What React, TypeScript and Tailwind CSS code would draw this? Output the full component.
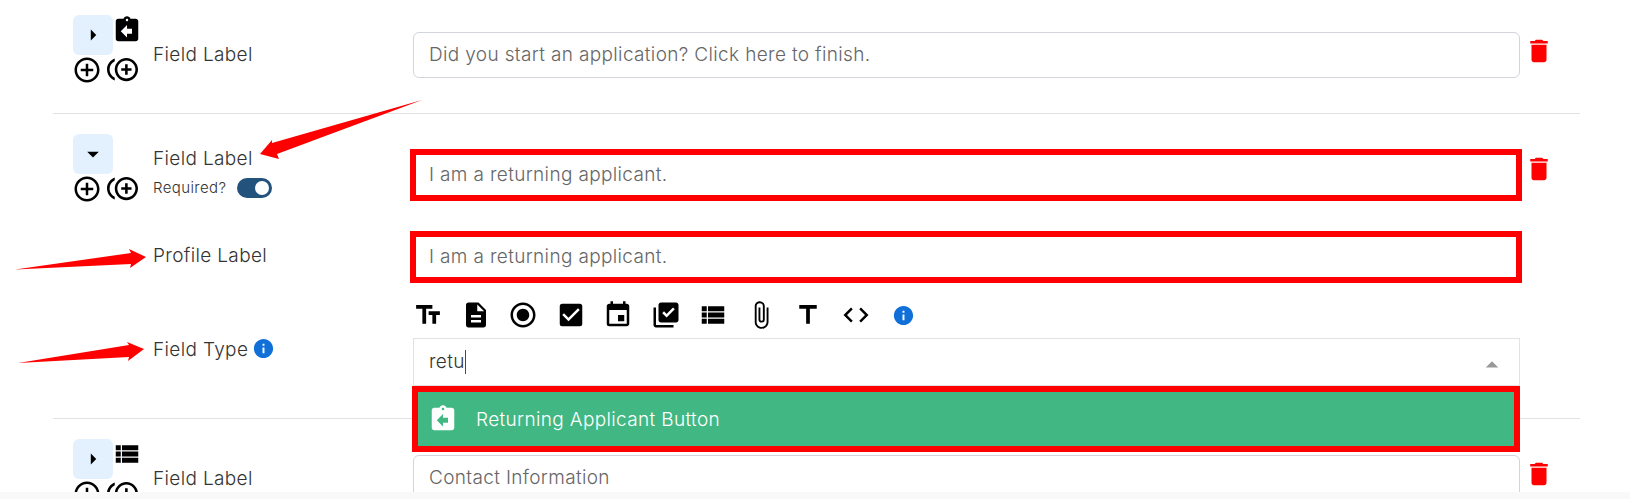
import type { ReactNode } from "react";
import {
  MdAddCircleOutline,
  MdArrowDropDown,
  MdArrowDropUp,
  MdArrowRight,
  MdAssignmentReturn,
  MdAttachFile,
  MdCheckBox,
  MdCode,
  MdControlPointDuplicate,
  MdDelete,
  MdDescription,
  MdEvent,
  MdInfo,
  MdLibraryAddCheck,
  MdRadioButtonChecked,
  MdTextFields,
  MdTitle,
  MdViewList,
} from "react-icons/md";

const fieldIcons = [
  MdTextFields,
  MdDescription,
  MdRadioButtonChecked,
  MdCheckBox,
  MdEvent,
  MdLibraryAddCheck,
  MdViewList,
  MdAttachFile,
  MdTitle,
  MdCode,
];

function Handle({ open, icon }: { open?: boolean; icon?: ReactNode }) {
  return (
    <div className="w-[80px] shrink-0">
      <div className="flex items-start h-[40px]">
        <button className="w-10 h-10 rounded-md bg-[#e3f0fd] flex items-center justify-center text-black">
          {open ? <MdArrowDropDown size={28} /> : <MdArrowRight size={26} />}
        </button>
        <span className="-ml-[1px]">{icon}</span>
      </div>
      <div className="flex items-center gap-[5px] -mt-[1px] -ml-[1px] text-black">
        <MdAddCircleOutline size={30} />
        <MdControlPointDuplicate size={31} />
      </div>
    </div>
  );
}

function TextBox({ value, children }: { value: string; children?: ReactNode }) {
  return (
    <div className="relative w-[1107px] h-[46px] rounded-md border border-[#d1d5db] bg-white flex items-center px-[15px] pt-[1px] text-[19px] tracking-[0.35px] text-[#666]">
      {value}
      {children}
    </div>
  );
}

function RedFrame() {
  return <div className="absolute -left-[4px] -right-[3px] -top-[4px] -bottom-[4px] border-[6px] border-[#ff0000]" />;
}

function Trash() {
  return <MdDelete size={30} className="text-[#ff0000] ml-[4px] shrink-0" />;
}

export default function App() {
  return (
    <div className="relative h-[499px] overflow-hidden bg-white font-['Inter','Liberation_Sans',sans-serif] font-light text-[#333]">
      <div className="mx-[53px] w-[1527px]">
        {/* row 1 */}
        <div className="h-[114px] border-b border-[#e2e2e2] pt-[15px] pl-[20px] flex">
          <Handle icon={<MdAssignmentReturn size={30} className="text-black" />} />
          <div className="w-[260px] pt-[28px] text-[19px] tracking-[0.35px] leading-6">Field Label</div>
          <div className="pt-[17px] flex items-start gap-0">
            <TextBox value="Did you start an application? Click here to finish." />
            <span className="pt-[4px]"><Trash /></span>
          </div>
        </div>

        {/* row 2 */}
        <div className="h-[305px] border-b border-[#e2e2e2] pt-[20px] pl-[20px]">
          <div className="flex h-[80px]">
            <Handle open />
            <div className="w-[260px] pt-[13px]">
              <div className="text-[19px] tracking-[0.35px] leading-6">Field Label</div>
              <div className="flex items-center gap-[11px] mt-[7px] text-[15px] tracking-[0.4px] leading-5">
                Required?
                <span className="w-[35px] h-[20px] rounded-full bg-[#23527c] flex items-center justify-end pr-[3px]">
                  <span className="w-[14px] h-[14px] rounded-full bg-white" />
                </span>
              </div>
            </div>
            <div className="pt-[18px] flex items-start">
              <TextBox value="I am a returning applicant.">
                <RedFrame />
              </TextBox>
              <span className="pt-[2px]"><Trash /></span>
            </div>
          </div>

          <div className="flex h-[69px] pl-[80px]">
            <div className="w-[260px] pt-[30px] text-[19px] tracking-[0.35px] leading-6">Profile Label</div>
            <div className="pt-[20px]">
              <TextBox value="I am a returning applicant.">
                <RedFrame />
              </TextBox>
            </div>
          </div>

          <div className="flex pl-[80px]">
            <div className="w-[260px] pt-[55px] flex items-start gap-[4px]">
              <span className="text-[19px] tracking-[0.35px] leading-6">Field Type</span>
              <MdInfo size={23} className="text-[#1070d8] -mt-[1px]" />
            </div>
            <div className="relative w-[1107px] pt-[17px]">
              <div className="flex items-center gap-[17.5px] text-black h-[30px]">
                {fieldIcons.map((Icon, i) => (
                  <Icon key={i} size={30} />
                ))}
                <MdInfo size={23} className="text-[#1070d8] ml-[4px]" />
              </div>
              <div className="relative mt-[8px] h-[48px] border border-[#e2e2e2] bg-white flex items-center pl-[15px] pr-[12px] text-[19px] tracking-[0.35px] text-[#333]">
                <span>retu</span>
                <span className="w-px h-[24px] bg-[#23527c]" />
                <MdArrowDropUp size={30} className="ml-auto mt-[5px] text-[#999]" />
                <div className="absolute -left-[2px] -right-px top-[47px] h-[66px] border-[6px] border-[#ff0000] bg-[#41b883] flex items-center pl-[10px] text-white z-10">
                  <MdAssignmentReturn size={30} />
                  <span className="ml-[18px] pt-[3px]">Returning Applicant Button</span>
                </div>
              </div>
            </div>
          </div>
        </div>

        {/* row 3, cut off by the window */}
        <div className="pt-[20px] pl-[20px] flex">
          <Handle icon={<MdViewList size={30} className="text-black" />} />
          <div className="w-[260px] pt-[28px] text-[19px] tracking-[0.35px] leading-6">Field Label</div>
          <div className="pt-[16px] flex items-start">
            <TextBox value="Contact Information" />
            <span className="pt-[4px]"><Trash /></span>
          </div>
        </div>
      </div>

      {/* annotation arrows */}
      <svg className="absolute inset-0 pointer-events-none" width="1630" height="499" fill="#ff0000">
        <polygon points="422,100 272,143 272,140 260,154 279,159 277,154" />
        <polygon points="15,269.5 131,253 129,249 146,257 130,268 131,264" />
        <polygon points="18,363 129,345 127,342 144,349 128,361 129,357" />
      </svg>

      <div className="absolute bottom-0 left-0 right-0 h-[7px] bg-[#f9f9f9]" />
    </div>
  );
}
